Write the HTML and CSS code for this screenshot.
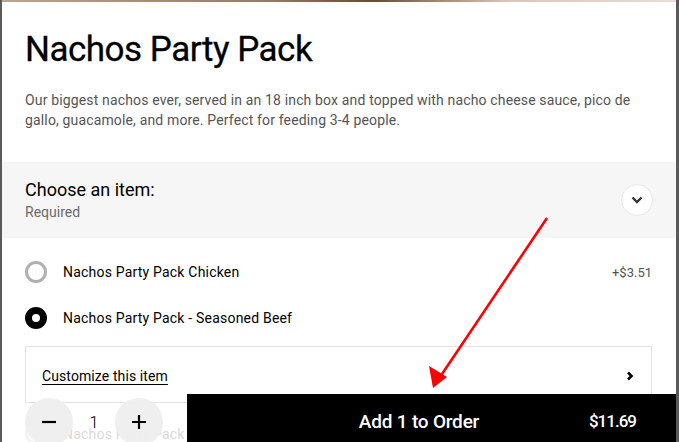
FILE: index.html
```html
<!DOCTYPE html>
<html lang="en">
<head>
<meta charset="utf-8">
<title>Nachos Party Pack</title>
<link rel="stylesheet" href="styles.css">
</head>
<body>
<div class="modal">
  <div class="hero"></div>
  <div class="content">
    <h1 class="title">Nachos Party Pack</h1>
    <p class="desc">Our biggest nachos ever, served in an 18 inch box and topped with nacho cheese sauce, pico de gallo, guacamole, and more. Perfect for feeding 3-4 people.</p>
  </div>
  <div class="group-head">
    <div class="group-text">
      <div class="group-title">Choose an item:</div>
      <div class="group-sub">Required</div>
    </div>
    <div class="collapse-btn">
      <svg width="12" height="8" viewBox="0 0 12 8"><path d="M1.5 1.5 L6 6 L10.5 1.5" fill="none" stroke="#333" stroke-width="2.4"/></svg>
    </div>
  </div>
  <div class="options">
    <div class="option">
      <span class="radio"></span>
      <span class="opt-label">Nachos Party Pack Chicken</span>
      <span class="opt-price">+$3.51</span>
    </div>
    <div class="option">
      <span class="radio checked"></span>
      <span class="opt-label">Nachos Party Pack - Seasoned Beef</span>
    </div>
    <div class="customize">
      <span class="cust-link">Customize this item</span>
      <svg width="8" height="12" viewBox="0 0 8 12"><path d="M2 2.5 L5.5 6 L2 9.5" fill="none" stroke="#000" stroke-width="2.6"/></svg>
    </div>
    <div class="option faded">
      <span class="radio"></span>
      <span class="opt-label">Nachos Party Pack Steak</span>
    </div>
  </div>

  <div class="footer">
    <div class="stepper">
      <div class="step-btn">
        <svg width="16" height="16" viewBox="0 0 16 16"><path d="M1 8 H15" stroke="#000" stroke-width="2.2"/></svg>
      </div>
      <span class="qty">1</span>
      <div class="step-btn">
        <svg width="16" height="16" viewBox="0 0 16 16"><path d="M1 8 H15 M8 1 V15" stroke="#000" stroke-width="2.2"/></svg>
      </div>
    </div>
    <div class="add-btn">
      <span class="add-label">Add 1 to Order</span>
      <span class="add-price">$11.69</span>
    </div>
  </div>

  <svg class="annot" width="679" height="442" viewBox="0 0 679 442">
    <line x1="547" y1="218" x2="440" y2="377" stroke="#f00" stroke-width="2.6"/>
    <polygon points="433,388 429,366 447,377" fill="#f00"/>
  </svg>
</div>
</body>
</html>
```

FILE: styles.css
```css
* { box-sizing: border-box; }
html, body { margin: 0; padding: 0; }
body {
  background: #5a5a5a;
  width: 679px;
  height: 442px;
  overflow: hidden;
  font-family: Roboto, "Noto Sans", sans-serif;
  color: #000;
}
.modal {
  position: relative;
  margin-left: 2px;
  width: 674px;
  height: 442px;
  background: #fff;
  overflow: hidden;
}
.hero {
  height: 2px;
  background: linear-gradient(90deg, #b9a58f 0%, #9a7a58 40%, #6f4a24 55%, #d9c7bc 75%, #e9dcd6 100%);
}
.content {
  padding: 26px 23px 0 23px;
}
.title {
  margin: 0;
  font-size: 35px;
  font-weight: 400;
  letter-spacing: -0.5px;
  line-height: 44px;
  -webkit-text-stroke: 0.3px #000;
}
.desc {
  margin: 18px 0 0 0;
  font-size: 14px;
  line-height: 20px;
  color: #545454;
  letter-spacing: 0.15px;
  width: 614px;
}
.group-head {
  margin-top: 32px;
  height: 76px;
  background: #f6f6f6;
  display: flex;
  align-items: center;
  justify-content: space-between;
  padding: 0 23px 0 23px;
}
.group-title {
  font-size: 18px;
  line-height: 24px;
  letter-spacing: 0px;
}
.group-sub {
  font-size: 14px;
  line-height: 20px;
  color: #6b6b6b;
}
.collapse-btn {
  width: 32px;
  height: 32px;
  border-radius: 50%;
  background: #fff;
  border: 1px solid #e8e8e8;
  display: flex;
  align-items: center;
  justify-content: center;
}
.options {
  padding: 0 24px 0 23px;
}
.option {
  height: 46px;
  display: flex;
  align-items: center;
}
.options .option:first-child { margin-top: 11px; }
.radio {
  width: 22px;
  height: 22px;
  border-radius: 50%;
  border: 3px solid #afafaf;
  flex: none;
}
.radio.checked {
  border: 7px solid #000;
  background: #fff;
}
.opt-label {
  margin-left: 16px;
  font-size: 14px;
  letter-spacing: 0.2px;
  flex: 1;
}
.opt-price {
  font-size: 13px;
  color: #545454;
}
.customize {
  margin-top: 5px;
  height: 57px;
  border: 1px solid #e2e2e2;
  display: flex;
  align-items: center;
  justify-content: space-between;
  padding: 2px 17px 0 16px;
}
.cust-link {
  font-size: 14px;
  letter-spacing: 0.1px;
  text-decoration: underline;
  text-underline-offset: 3px;
}
.option.faded { margin-top: 8px; opacity: 0.15; }
.footer {
  position: absolute;
  left: 0;
  right: 0;
  bottom: 0;
  height: 48px;
  display: flex;
  align-items: flex-end;
}
.stepper {
  width: 185px;
  padding-left: 23px;
  display: flex;
  align-items: center;
  align-self: flex-start;
  margin-top: 4px;
}
.step-btn {
  width: 48px;
  height: 48px;
  border-radius: 50%;
  background: rgba(238,238,238,0.95);
  display: flex;
  align-items: center;
  justify-content: center;
}
.qty {
  width: 42px;
  text-align: center;
  font-size: 17px;
  font-weight: 300;
}
.add-btn {
  flex: 1;
  height: 48px;
  background: #000;
  color: #fff;
  display: flex;
  align-items: center;
  padding: 6px 40px 0 0;
  position: relative;
}
.add-label {
  flex: 1;
  text-align: center;
  padding-left: 62px;
  font-size: 19px;
  font-weight: 500;
  letter-spacing: -0.2px;
}
.add-price {
  font-size: 17px;
  font-weight: 500;
  letter-spacing: -1px;
}
.annot {
  position: absolute;
  left: -2px;
  top: 0;
  pointer-events: none;
}
```
